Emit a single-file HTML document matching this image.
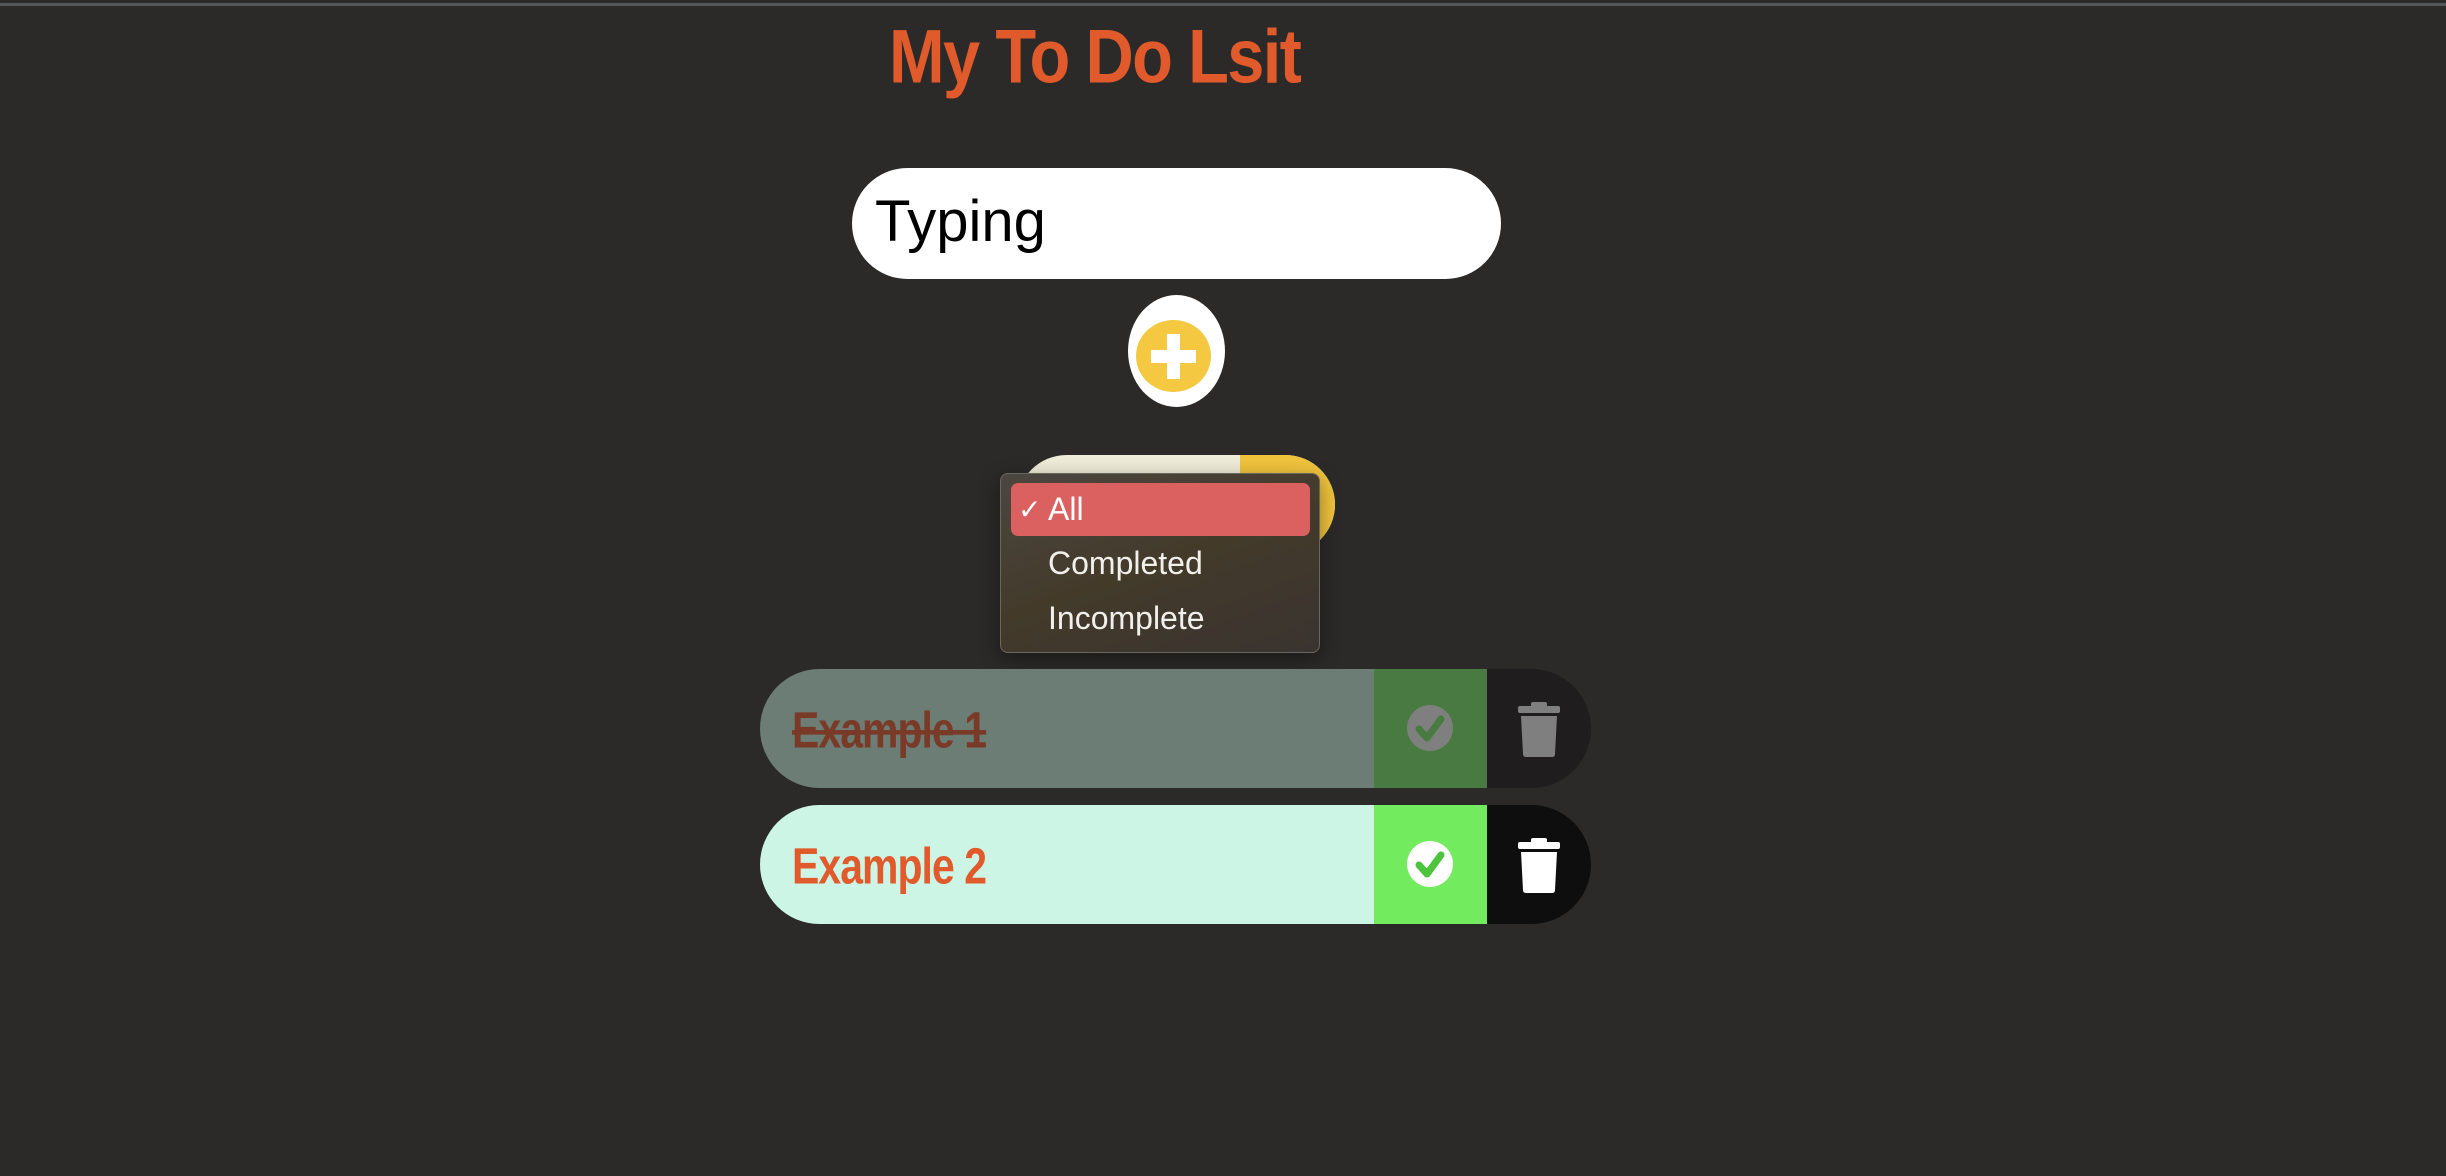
<!DOCTYPE html>
<html><head><meta charset="utf-8"><style>
html,body{margin:0;padding:0;width:2446px;height:1176px;overflow:hidden;background:#2b2a28;font-family:"Liberation Sans",sans-serif}
.topline{position:absolute;left:0;top:3px;width:2446px;height:3px;background:#55575a}
.title{position:absolute;left:889px;top:14px;height:90px;color:#e05a2b;font-family:Impact,"Liberation Sans Narrow","Liberation Sans",sans-serif;font-weight:bold;font-size:80px;line-height:90px;white-space:nowrap;transform-origin:left top;transform:scale(0.835,0.95);letter-spacing:-2px}
.input{position:absolute;left:852px;top:168px;width:649px;height:111px;background:#fff;border-radius:56px}
.input span{position:absolute;left:23px;top:20px;font-size:58px;color:#000}
.add{position:absolute;left:1128px;top:295px;width:97px;height:112px;background:#fff;border-radius:50%}
.add .y{position:absolute;left:8px;top:25px;width:75px;height:72px;background:#f5c842;border-radius:50%}
.add .h{position:absolute;left:15px;top:30px;width:45px;height:13px;background:#fff}
.add .v{position:absolute;left:31px;top:14px;width:13px;height:45px;background:#fff}
.sel{position:absolute;left:1017px;top:455px;width:318px;height:99px;border-radius:50px;overflow:hidden;background:#eeecd8}
.sel .r{position:absolute;left:223px;top:0;width:95px;height:99px;background:#f0c33c}
.dd{position:absolute;left:1000px;top:473px;width:318px;height:178px;border:1px solid #6a6660;border-radius:8px;background:linear-gradient(160deg,#4b4740 0%,#433a2a 50%,#3a3430 100%);box-shadow:0 6px 20px rgba(0,0,0,.4)}
.hl{position:absolute;left:10px;top:9px;width:299px;height:53px;background:#db6060;border-radius:7px}
.it{position:absolute;left:47px;color:#f2f0ec;font-size:32px;line-height:40px}
.ck{position:absolute;left:17px;color:#fff;font-size:28px;top:19px}
.todo{position:absolute;left:760px;width:831px;height:119px;border-radius:60px;overflow:hidden}
.todo .t{position:absolute;left:0;top:0;width:614px;height:119px}
.todo .g{position:absolute;left:614px;top:0;width:113px;height:119px}
.todo .d{position:absolute;left:727px;top:0;width:104px;height:119px}
.todo .tx{position:absolute;left:32px;top:30px;font-family:Impact,"Liberation Sans Narrow","Liberation Sans",sans-serif;font-weight:bold;font-size:44px;line-height:56px;transform-origin:left top;transform:scale(0.93,1.15);letter-spacing:-1px;white-space:nowrap}
</style></head><body>
<div class="topline"></div>
<div class="title">My To Do Lsit</div>
<div class="input"><span>Typing</span></div>
<div class="add"><div class="y"><div class="h"></div><div class="v"></div></div></div>
<div class="sel"><div class="r"></div></div>
<div class="dd">
<div class="hl"></div>
<div class="ck">✓</div>
<div class="it" style="top:15px;color:#fff">All</div>
<div class="it" style="top:69px">Completed</div>
<div class="it" style="top:124px">Incomplete</div>
</div>

<div class="todo" style="top:669px">
<div class="t" style="background:#6b7d74"><div class="tx" style="color:#7a3a28;text-decoration:line-through">Example 1</div></div>
<div class="g" style="background:#497a41">
<svg width="113" height="119" viewBox="0 0 113 119"><circle cx="56" cy="59" r="23" fill="#7f7f7f"/><path d="M45 60 L53 69 L67 50" stroke="#497a41" stroke-width="7" fill="none" stroke-linecap="round" stroke-linejoin="round"/></svg></div>
<div class="d" style="background:#1f1d1e">
<svg width="104" height="119" viewBox="0 0 104 119"><rect x="31" y="37" width="42" height="7" rx="2" fill="#7f7f7f"/><rect x="44" y="33" width="16" height="6" rx="2" fill="#7f7f7f"/><path d="M34 47 H70 L68 85 Q68 88 65 88 H39 Q36 88 36 85 Z" fill="#7f7f7f"/></svg></div>
</div>

<div class="todo" style="top:805px">
<div class="t" style="background:#cdf5e5"><div class="tx" style="color:#e05a2b">Example 2</div></div>
<div class="g" style="background:#72eb5e">
<svg width="113" height="119" viewBox="0 0 113 119"><circle cx="56" cy="59" r="23" fill="#fff"/><path d="M45 60 L53 69 L67 50" stroke="#4cc43c" stroke-width="7" fill="none" stroke-linecap="round" stroke-linejoin="round"/></svg></div>
<div class="d" style="background:#0e0e0e">
<svg width="104" height="119" viewBox="0 0 104 119"><rect x="31" y="37" width="42" height="7" rx="2" fill="#fff"/><rect x="44" y="33" width="16" height="6" rx="2" fill="#fff"/><path d="M34 47 H70 L68 85 Q68 88 65 88 H39 Q36 88 36 85 Z" fill="#fff"/></svg></div>
</div>
</body></html>
